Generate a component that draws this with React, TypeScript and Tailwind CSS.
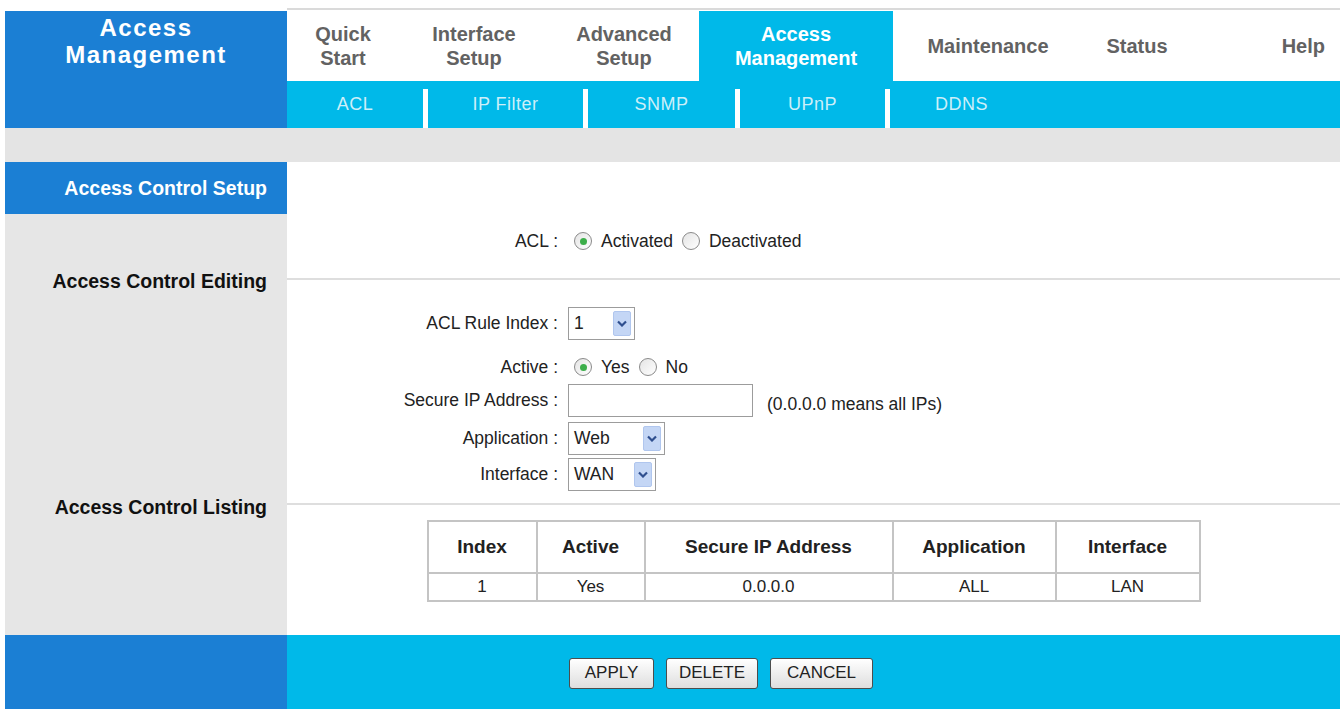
import React from "react";

const tabs = [
	{ label: ["Quick", "Start"], w: "w-[112px]" },
	{ label: ["Interface", "Setup"], w: "w-[150px]" },
	{ label: ["Advanced", "Setup"], w: "w-[150px]" },
];

const subItems = [
	{ label: "ACL", w: "w-[136px]" },
	{ label: "IP Filter", w: "w-[155px]" },
	{ label: "SNMP", w: "w-[147px]" },
	{ label: "UPnP", w: "w-[145px]" },
];

const Radio = ({ checked }: { checked?: boolean }) => (
	<span className="w-[18px] h-[18px] rounded-full border border-[#8a8a8a] bg-gradient-to-br from-[#e4e4e4] to-white flex items-center justify-center">
		{checked && <span className="w-[7px] h-[7px] rounded-full bg-[#3cae4a]" />}
	</span>
);

const Select = ({ value, w }: { value: string; w: string }) => (
	<div className={`${w} h-[33px] border border-[#9c9c9c] bg-white flex items-center justify-between pl-[5px] pr-[3px]`}>
		<span>{value}</span>
		<span className="w-[18px] h-[25px] bg-[#c4d6f5] border border-[#b0c6ee] rounded-[2px] flex items-center justify-center">
			<svg width="10" height="7" viewBox="0 0 10 7">
				<path d="M1 1.5 L5 5.5 L9 1.5" stroke="#2f4f8f" strokeWidth="2.2" fill="none" />
			</svg>
		</span>
	</div>
);

const FormRow = ({ label, children, h, mt }: { label: string; children: React.ReactNode; h: string; mt: string }) => (
	<div className={`flex items-center ${h} ${mt}`}>
		<div className="w-[271px] text-right">{label}</div>
		<div className="ml-[10px] flex items-center">{children}</div>
	</div>
);

const Button = ({ label, w }: { label: string; w: string }) => (
	<button className={`${w} h-[31px] rounded-[3px] border border-[#4d4d4d] bg-gradient-to-b from-white to-[#dedede] text-[17px] text-[#222]`}>
		{label}
	</button>
);

const App = () => {
	return (
		<div className="w-[1343px] h-[709px] bg-white overflow-hidden font-['Liberation_Sans',Arial,sans-serif] text-[#222]">
			<div className="ml-[5px] w-[1335px] pt-[8px]">
				{/* header */}
				<div className="flex">
					<div className="w-[282px] mt-[3px] h-[117px] bg-[#1b7fd4] text-white font-bold text-[24px] leading-[27px] tracking-[1.5px] text-center pt-[3px]">
						<div>Access</div>
						<div>Management</div>
					</div>
					<div className="flex-1 flex flex-col">
						<div className="h-[73px] border-t-2 border-[#dadada] flex pt-[1px] text-[20px] font-bold leading-[24px] text-[#626262]">
							{tabs.map((t) => (
								<div key={t.label[0]} className={`${t.w} flex flex-col items-center justify-center`}>
									<span>{t.label[0]}</span>
									<span>{t.label[1]}</span>
								</div>
							))}
							<div className="w-[194px] bg-[#00b9e9] text-white flex flex-col items-center justify-center">
								<span>Access</span>
								<span>Management</span>
							</div>
							<div className="w-[190px] flex items-center justify-center">Maintenance</div>
							<div className="w-[108px] flex items-center justify-center">Status</div>
							<div className="flex-1 flex items-center justify-end pr-[15px]">Help</div>
						</div>
						<div className="h-[47px] bg-[#00b9e9] flex text-[18px] text-[#cdeff9] tracking-[0.5px]">
							{subItems.map((s) => (
								<React.Fragment key={s.label}>
									<div className={`${s.w} flex items-center justify-center`}>{s.label}</div>
									<div className="w-[5px] mt-[8px] bg-white" />
								</React.Fragment>
							))}
							<div className="flex-1 flex items-center pl-[45px]">DDNS</div>
						</div>
					</div>
				</div>

				<div className="h-[34px] bg-[#e4e4e4]" />

				{/* main */}
				<div className="flex h-[473px]">
					<div className="w-[282px] bg-[#e6e6e6] text-[19.5px] font-bold leading-[18px] text-right">
						<div className="h-[52px] bg-[#1b7fd4] text-white flex items-center justify-end pr-[20px]">
							Access Control Setup
						</div>
						<div className="pt-[58px] pr-[20px] text-[#111]">Access Control Editing</div>
						<div className="mt-[208px] pr-[20px] text-[#111]">Access Control Listing</div>
					</div>

					<div className="flex-1 flex flex-col text-[17.5px]">
						<div className="h-[116px] pt-[68px]">
							<FormRow label="ACL :" h="h-[22px]" mt="mt-0">
								<span className="ml-[6px]">
									<Radio checked />
								</span>
								<span className="ml-[9px]">Activated</span>
								<span className="ml-[9px]">
									<Radio />
								</span>
								<span className="ml-[9px]">Deactivated</span>
							</FormRow>
						</div>
						<div className="h-[2px] bg-[#dedede]" />
						<div className="h-[223px] pt-[27px]">
							<FormRow label="ACL Rule Index :" h="h-[33px]" mt="mt-0">
								<Select value="1" w="w-[67px]" />
							</FormRow>
							<FormRow label="Active :" h="h-[32px]" mt="mt-[11px]">
								<span className="ml-[6px]">
									<Radio checked />
								</span>
								<span className="ml-[9px]">Yes</span>
								<span className="ml-[9px]">
									<Radio />
								</span>
								<span className="ml-[9px]">No</span>
							</FormRow>
							<FormRow label="Secure IP Address :" h="h-[33px]" mt="mt-[1px]">
								<div className="w-[185px] h-[33px] border border-[#9c9c9c] bg-white" />
								<span className="ml-[14px] mt-[8px]">(0.0.0.0 means all IPs)</span>
							</FormRow>
							<FormRow label="Application :" h="h-[33px]" mt="mt-[5px]">
								<Select value="Web" w="w-[97px]" />
							</FormRow>
							<FormRow label="Interface :" h="h-[32px]" mt="mt-[3px]">
								<Select value="WAN" w="w-[88px]" />
							</FormRow>
						</div>
						<div className="h-[2px] bg-[#dedede]" />
						<div className="flex-1 pt-[15px] flex justify-center">
							<table className="h-[80px] border-collapse border-2 border-[#c4c4c4] text-center">
								<thead>
									<tr className="h-[52px] text-[19px] font-bold">
										<th className="w-[109px] border-2 border-[#c4c4c4]">Index</th>
										<th className="w-[108px] border-2 border-[#c4c4c4]">Active</th>
										<th className="w-[248px] border-2 border-[#c4c4c4]">Secure IP Address</th>
										<th className="w-[163px] border-2 border-[#c4c4c4]">Application</th>
										<th className="w-[144px] border-2 border-[#c4c4c4]">Interface</th>
									</tr>
								</thead>
								<tbody>
									<tr className="h-[28px] text-[17px]">
										<td className="border-2 border-[#c4c4c4]">1</td>
										<td className="border-2 border-[#c4c4c4]">Yes</td>
										<td className="border-2 border-[#c4c4c4]">0.0.0.0</td>
										<td className="border-2 border-[#c4c4c4]">ALL</td>
										<td className="border-2 border-[#c4c4c4]">LAN</td>
									</tr>
								</tbody>
							</table>
						</div>
					</div>
				</div>

				{/* footer */}
				<div className="flex h-[74px]">
					<div className="w-[282px] bg-[#1b7fd4]" />
					<div className="flex-1 bg-[#00b9e9] flex items-center gap-[12px] pl-[282px] pt-[2px]">
						<Button label="APPLY" w="w-[85px]" />
						<Button label="DELETE" w="w-[92px]" />
						<Button label="CANCEL" w="w-[103px]" />
					</div>
				</div>
			</div>
		</div>
	);
};

export default App;
